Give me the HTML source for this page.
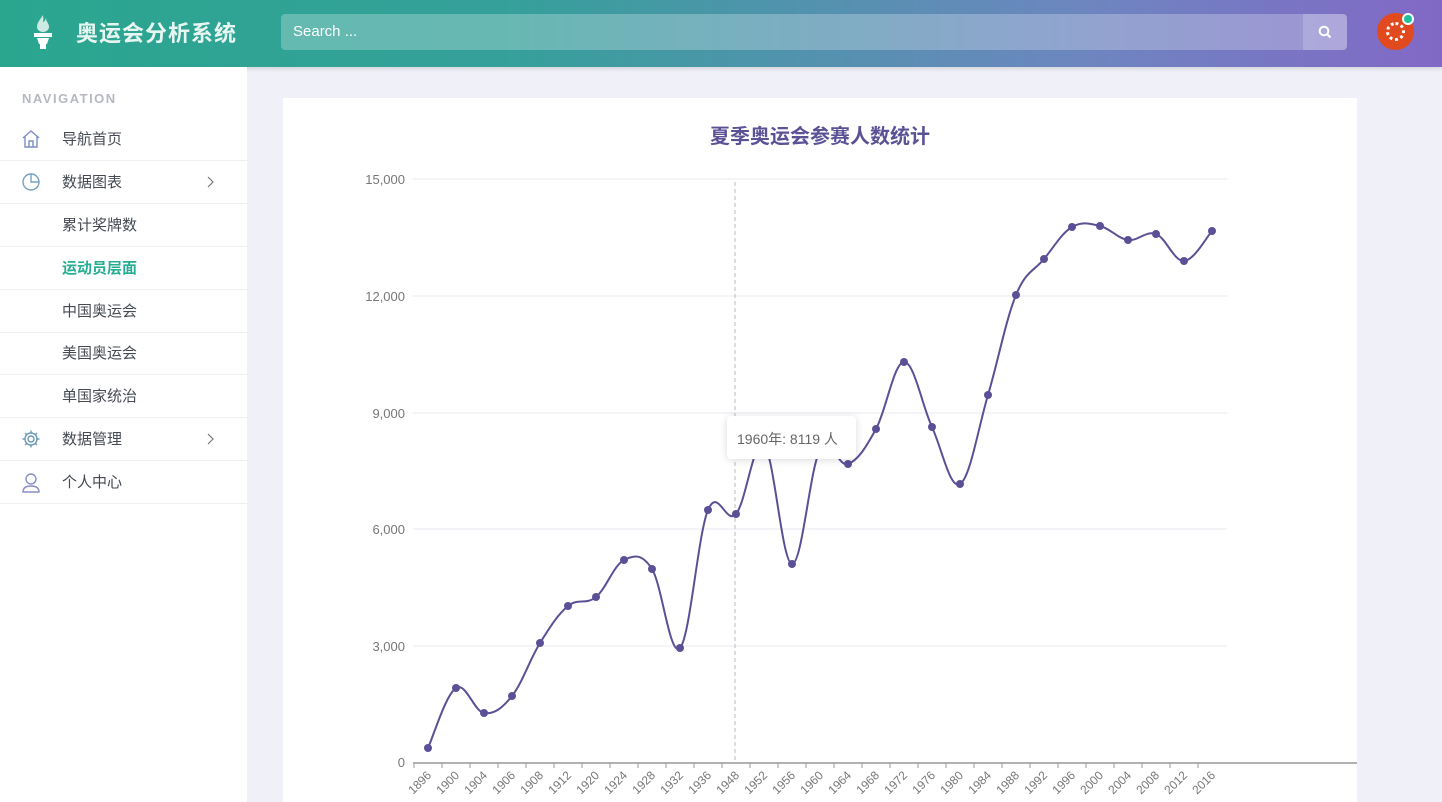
<!DOCTYPE html>
<html><head><meta charset="utf-8"><style>
*{margin:0;padding:0;box-sizing:border-box}
body{width:1442px;height:802px;overflow:hidden;background:#f0f1f8;font-family:"Liberation Sans","Noto Sans CJK SC",sans-serif;position:relative}
.hdr{position:absolute;left:0;top:0;width:1442px;height:67px;background:linear-gradient(90deg,#2aa68f 0%,#35a09a 35%,#6d86c0 75%,#8268c6 100%);box-shadow:0 2px 4px rgba(0,0,0,.12)}
.logo{position:absolute;left:76px;top:16px;color:#e8f6f2;font-size:22px;font-weight:bold;letter-spacing:1px}
.search{position:absolute;left:281px;top:14px;width:1066px;height:36px;border-radius:4px;background:rgba(255,255,255,.25)}
.search span{position:absolute;left:12px;top:9px;color:#fff;font-size:15px}
.sbtn{position:absolute;right:0;top:0;width:44px;height:36px;background:rgba(255,255,255,.18);border-radius:0 4px 4px 0}
.side{position:absolute;left:0;top:67px;width:247px;height:735px;background:#fff}
.nav{position:absolute;left:22px;top:24px;font-size:13px;color:#b6b9c0;letter-spacing:1.5px;font-weight:bold}
.it{position:absolute;left:0;width:247px;height:43px;border-bottom:1px solid #eef0f3;font-size:15px;color:#454a52}
.it span{position:absolute;left:62px;top:10px}
.it svg{position:absolute;left:21px;top:11px}
.it svg.ar{left:206px;top:15px}
.card{position:absolute;left:283px;top:98px;width:1074px;height:704px;background:#fff}
.title{position:absolute;left:0;width:1074px;top:22px;text-align:center;font-size:20px;font-weight:bold;color:#5b5296}
</style></head><body>
<div class="hdr">
<svg style="position:absolute;left:31px;top:13px" width="24" height="38" viewBox="0 0 24 38"><path d="M12 2c-4 6-6 8-6 12 0 3 3 5 6 5s6-2 6-5c0-4-3-5-3-9-1 3-2 4-3 4 1-3 0-5 0-7z" fill="#cde9e3"/><rect x="3" y="20" width="18" height="4" fill="#fff"/><path d="M6 25h12l-2 6H8z" fill="#fff"/><rect x="9" y="31" width="6" height="5" fill="#fff"/></svg>
<div class="logo">奥运会分析系统</div>
<div class="search"><span>Search ...</span><div class="sbtn"><svg style="position:absolute;left:15px;top:11px" width="14" height="14" viewBox="0 0 14 14"><circle cx="6" cy="6" r="4.3" stroke="#fff" stroke-width="2" fill="none"/><path d="M9 9l3.5 3.5" stroke="#fff" stroke-width="2.2"/></svg></div></div>
<div style="position:absolute;left:1377px;top:13px;width:37px;height:37px;border-radius:50%;background:#e14a1e"><div style="position:absolute;left:9px;top:9px;width:19px;height:19px;border-radius:50%;border:3px dotted #fff"></div></div>
<div style="position:absolute;left:1402px;top:13px;width:12px;height:12px;border-radius:50%;background:#1fbf9a;border:2px solid #fff"></div>
</div>
<div class="side">
<div class="nav">NAVIGATION</div>
<div class="it" style="top:51px"><svg width="20" height="20" viewBox="0 0 20 20" fill="none" stroke="#7a8fc0" stroke-width="1.4"><path d="M2 9l8-7 8 7M4 7v11h12V7M8 18v-6h4v6"/></svg><span>导航首页</span></div>
<div class="it" style="top:94px"><svg width="20" height="20" viewBox="0 0 20 20" fill="none" stroke="#7aa0c0" stroke-width="1.4"><circle cx="10" cy="10" r="8"/><path d="M10 2v8h8"/></svg><span>数据图表</span><svg class="ar" width="8" height="12" viewBox="0 0 8 12"><path d="M2 1l5 5-5 5" fill="none" stroke="#777" stroke-width="1.2"/></svg></div>
<div class="it" style="top:137px"><span>累计奖牌数</span></div>
<div class="it" style="top:180px"><span style="color:#27ae92;font-weight:bold">运动员层面</span></div>
<div class="it" style="top:223px"><span>中国奥运会</span></div>
<div class="it" style="top:265px"><span>美国奥运会</span></div>
<div class="it" style="top:308px"><span>单国家统治</span></div>
<div class="it" style="top:351px"><svg width="20" height="20" viewBox="0 0 20 20" fill="none" stroke="#6a9ab8" stroke-width="1.4"><circle cx="10" cy="10" r="3"/><path d="M10 1.5v3M10 15.5v3M1.5 10h3M15.5 10h3M4 4l2 2M14 14l2 2M4 16l2-2M14 6l2-2"/><circle cx="10" cy="10" r="6"/></svg><span>数据管理</span><svg class="ar" width="8" height="12" viewBox="0 0 8 12"><path d="M2 1l5 5-5 5" fill="none" stroke="#777" stroke-width="1.2"/></svg></div>
<div class="it" style="top:394px"><svg width="20" height="22" viewBox="0 0 20 22" fill="none" stroke="#8a8ec8" stroke-width="1.4"><circle cx="10" cy="7" r="5"/><path d="M2 20c0-4 3-6 8-6s8 2 8 6z"/></svg><span>个人中心</span></div>
</div>
<div class="card"><div class="title">夏季奥运会参赛人数统计</div></div>
<svg id="ch" style="position:absolute;left:0;top:0" width="1442" height="802" font-family="Liberation Sans, sans-serif"></svg>
<div style="position:absolute;left:727px;top:416px;width:129px;height:43px;background:#fff;border-radius:4px;box-shadow:0 1px 8px rgba(0,0,0,.15);font-size:14px;color:#666;padding:13px 0 0 10px;font-family:'Liberation Sans','Noto Sans CJK SC',sans-serif">1960年: 8119 人</div>
<script>
var s='';var ys=[[15000,179],[12000,296],[9000,413],[6000,529],[3000,646],[0,762]];
ys.forEach(function(a){if(a[0])s+='<line x1="413" x2="1227" y1="'+a[1]+'" y2="'+a[1]+'" stroke="#e8e9f0"/>';s+='<text x="405" y="'+(a[1]+5)+'" text-anchor="end" font-size="13" fill="#777">'+a[0].toLocaleString('en-US')+'</text>';});
s+='<line x1="735" x2="735" y1="182" y2="762" stroke="#bbb" stroke-dasharray="4,3"/>';
s+='<line x1="413" x2="1357" y1="763" y2="763" stroke="#999" stroke-width="1.5"/>';
var yrs=[1896,1900,1904,1906,1908,1912,1920,1924,1928,1932,1936,1948,1952,1956,1960,1964,1968,1972,1976,1980,1984,1988,1992,1996,2000,2004,2008,2012,2016];
var py=[748,688,713,696,643,606,597,560,569,648,510,514,445,564,450,464,429,362,427,484,395,295,259,227,226,240,234,261,231];
var P=[];for(var i=0;i<yrs.length;i++){var x=428+i*28;P.push([x,py[i]]);var t=x-14;s+='<line x1="'+t+'" x2="'+t+'" y1="763" y2="768" stroke="#999"/>';s+='<text transform="translate('+(x+4)+',776) rotate(-45)" text-anchor="end" font-size="12" fill="#777">'+yrs[i]+'</text>';}
var d='M'+P[0][0]+','+P[0][1];for(var i=0;i<P.length-1;i++){var p0=P[Math.max(i-1,0)],p1=P[i],p2=P[i+1],p3=P[Math.min(i+2,P.length-1)],k=0.18;d+='C'+(p1[0]+(p2[0]-p0[0])*k)+','+(p1[1]+(p2[1]-p0[1])*k)+' '+(p2[0]-(p3[0]-p1[0])*k)+','+(p2[1]-(p3[1]-p1[1])*k)+' '+p2[0]+','+p2[1];}
s+='<path d="'+d+'" fill="none" stroke="#5b5096" stroke-width="2"/>';
P.forEach(function(p){s+='<circle cx="'+p[0]+'" cy="'+p[1]+'" r="4" fill="#5b5096"/>';});
document.getElementById('ch').innerHTML=s;
</script>
</body></html>
